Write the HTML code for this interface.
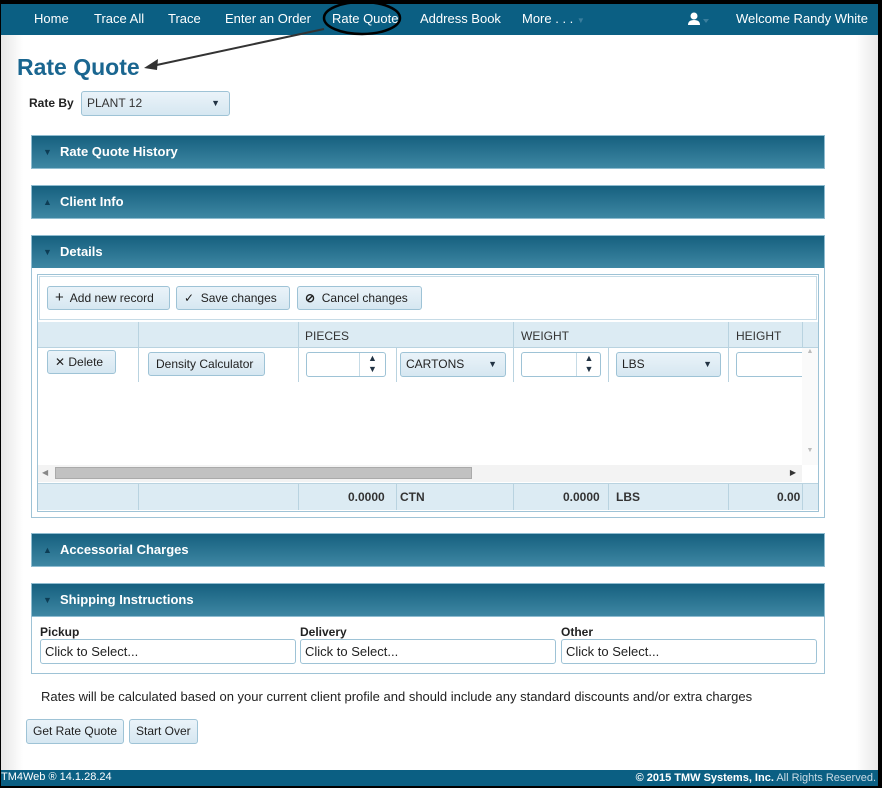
<!DOCTYPE html>
<html><head><style>
*{box-sizing:border-box;margin:0;padding:0}
body{width:882px;height:788px;background:#000;font-family:"Liberation Sans",Arial,sans-serif;position:relative;overflow:hidden}
.a{position:absolute}
#page{left:1px;top:4px;width:877px;height:782px;background:linear-gradient(90deg,#e6e6e6 0,#fff 22px,#fff 855px,#e8e8e8 877px)}
#nav{left:1px;top:4px;width:877px;height:31px;background:#0b5f83;color:#fff;font-size:13px}
#nav span{position:absolute;top:7px}
.hd{left:31px;width:794px;height:34px;border:1px solid #8fbcd0;background:linear-gradient(#16607f,#3e87a3);color:#fff;font-weight:bold;font-size:13px;padding:8px 0 0 28px}
.hd i{position:absolute;left:11px;top:11px;font-style:normal;font-size:9px;color:#0d3d55}
.btn{position:absolute;background:linear-gradient(#eaf3f9,#d6e7f1);border:1px solid #9ec3d6;border-radius:3px;font-size:12px;color:#222;height:24px;line-height:22px;padding:0 7px;white-space:nowrap}
.bx{position:absolute;border:1px solid #9ec3d6;border-radius:3px;background:#fff;height:25px;font-size:13px;padding:4px 4px;color:#222}
.vl{position:absolute;width:1px;background:#b9d3e0}
.lb{position:absolute;font-size:12px;color:#222}
</style></head><body>
<div class="a" id="page"></div>
<div class="a" id="nav">
<span style="left:33px">Home</span><span style="left:93px">Trace All</span><span style="left:167px">Trace</span><span style="left:224px">Enter an Order</span><span style="left:331px">Rate Quote</span><span style="left:419px">Address Book</span><span style="left:521px">More . . . <b style="font-size:8px;color:#3b7f9e">▼</b></span>
<svg style="position:absolute;left:687px;top:8px" width="24" height="14"><circle cx="6" cy="4" r="3.5" fill="#fff"/><path d="M0 13 Q0 8 6 8 Q12 8 12 13 Z" fill="#fff"/><path d="M15 7 L21 7 L18 11 Z" fill="#3b7f9e"/></svg>
<span style="left:735px">Welcome Randy White</span>
</div>
<svg class="a" style="left:0;top:0" width="882" height="120"><ellipse cx="362" cy="18" rx="38" ry="16" fill="none" stroke="#000" stroke-width="2.5"/><line x1="324" y1="29" x2="152" y2="66" stroke="#333" stroke-width="2"/><polygon points="144,68 158,59 157,70" fill="#333"/></svg>
<div class="a" style="left:17px;top:54px;font-size:23px;font-weight:bold;color:#1a6690">Rate Quote</div>
<div class="lb" style="left:29px;top:96px;font-size:12px;font-weight:bold">Rate By</div>
<div class="btn" style="left:81px;top:91px;width:149px;height:25px;padding:0 5px;font-size:12px;color:#333">PLANT 12<span style="position:absolute;right:9px;font-size:9px;color:#234">▼</span></div>

<div class="a hd" style="top:135px"><i>▼</i>Rate Quote History</div>
<div class="a hd" style="top:185px"><i>▲</i>Client Info</div>
<div class="a hd" style="top:235px"><i>▼</i>Details</div>
<div class="a" style="left:31px;top:268px;width:794px;height:250px;border:1px solid #9ec3d6;border-top:0;background:#fff"></div>
<div class="a" style="left:37px;top:274px;width:782px;height:238px;border:1px solid #9ec3d6;background:#fff"></div>
<div class="a" style="left:39px;top:276px;width:778px;height:44px;border:1px solid #c6dbe6"></div>
<div class="btn" style="left:47px;top:286px;width:123px"><b style="font-size:15px;font-weight:normal">+</b>&nbsp; Add new record</div>
<div class="btn" style="left:176px;top:286px;width:114px">✓&nbsp; Save changes</div>
<div class="btn" style="left:297px;top:286px;width:125px"><b>⊘</b>&nbsp; Cancel changes</div>
<div class="a" style="left:38px;top:322px;width:780px;height:26px;background:#dcebf3;border-bottom:1px solid #b9d3e0;font-size:12px;color:#333">
<span class="a" style="left:267px;top:7px">PIECES</span><span class="a" style="left:483px;top:7px">WEIGHT</span><span class="a" style="left:698px;top:7px">HEIGHT</span></div>
<div class="a" style="left:38px;top:483px;width:780px;height:27px;background:#dcebf3;border-top:1px solid #b9d3e0;font-size:12px;font-weight:bold;color:#333">
<span class="a" style="left:310px;top:6px">0.0000</span><span class="a" style="left:362px;top:6px">CTN</span><span class="a" style="left:525px;top:6px">0.0000</span><span class="a" style="left:578px;top:6px">LBS</span><span class="a" style="left:739px;top:6px">0.00</span></div>
<div class="vl" style="left:138px;top:322px;height:60px"></div><div class="vl" style="left:298px;top:322px;height:60px"></div><div class="vl" style="left:513px;top:322px;height:60px"></div><div class="vl" style="left:728px;top:322px;height:60px"></div><div class="vl" style="left:802px;top:322px;height:26px"></div>
<div class="vl" style="left:396px;top:348px;height:34px"></div><div class="vl" style="left:608px;top:348px;height:34px"></div>
<div class="vl" style="left:138px;top:483px;height:27px"></div><div class="vl" style="left:298px;top:483px;height:27px"></div><div class="vl" style="left:396px;top:483px;height:27px"></div><div class="vl" style="left:513px;top:483px;height:27px"></div><div class="vl" style="left:608px;top:483px;height:27px"></div><div class="vl" style="left:728px;top:483px;height:27px"></div><div class="vl" style="left:802px;top:483px;height:27px"></div>
<div class="btn" style="left:47px;top:350px;width:69px">✕ Delete</div>
<div class="btn" style="left:148px;top:352px;width:117px">Density Calculator</div>
<div class="bx" style="left:306px;top:352px;width:80px"><span style="position:absolute;left:52px;top:0;height:23px;border-left:1px solid #c6dbe6;width:26px;font-size:9px;text-align:center;line-height:11px;color:#234">▲<br>▼</span></div>
<div class="btn" style="left:400px;top:352px;width:106px;height:25px;line-height:23px;padding:0 5px">CARTONS<span style="position:absolute;right:8px;font-size:9px;color:#234">▼</span></div>
<div class="bx" style="left:521px;top:352px;width:80px"><span style="position:absolute;left:54px;top:0;height:23px;border-left:1px solid #c6dbe6;width:25px;font-size:9px;text-align:center;line-height:11px;color:#234">▲<br>▼</span></div>
<div class="btn" style="left:616px;top:352px;width:105px;height:25px;line-height:23px;padding:0 5px">LBS<span style="position:absolute;right:8px;font-size:9px;color:#234">▼</span></div>
<div class="bx" style="left:736px;top:352px;width:70px"></div>
<div class="a" style="left:802px;top:348px;width:16px;height:117px;background:#fafafa;font-size:7px;color:#bbb;text-align:center">▲<div style="margin-top:92px">▼</div></div>
<div class="a" style="left:38px;top:465px;width:764px;height:17px;background:#f3f3f3;font-size:8px;color:#888"><span class="a" style="left:4px;top:3px">◀</span><span class="a" style="right:6px;top:3px;color:#333">▶</span></div>
<div class="a" style="left:55px;top:467px;width:417px;height:12px;background:#c1c1c1;border:1px solid #aaa"></div>

<div class="a hd" style="top:533px"><i>▲</i>Accessorial Charges</div>
<div class="a hd" style="top:583px"><i>▼</i>Shipping Instructions</div>
<div class="a" style="left:31px;top:617px;width:794px;height:57px;border:1px solid #9ec3d6;border-top:0;background:#fff"></div>
<div class="lb" style="left:40px;top:625px;font-weight:bold">Pickup</div>
<div class="lb" style="left:300px;top:625px;font-weight:bold">Delivery</div>
<div class="lb" style="left:561px;top:625px;font-weight:bold">Other</div>
<div class="bx" style="left:40px;top:639px;width:256px">Click to Select...</div>
<div class="bx" style="left:300px;top:639px;width:256px">Click to Select...</div>
<div class="bx" style="left:561px;top:639px;width:256px">Click to Select...</div>
<div class="lb" style="left:41px;top:689px;font-size:13px">Rates will be calculated based on your current client profile and should include any standard discounts and/or extra charges</div>
<div class="btn" style="left:26px;top:719px;height:25px;line-height:23px;padding:0 6px">Get Rate Quote</div>
<div class="btn" style="left:129px;top:719px;height:25px;line-height:23px;padding:0 6px">Start Over</div>
<div class="a" style="left:1px;top:770px;width:877px;height:16px;background:#0b5f83;color:#fff;font-size:11px">
<span class="a" style="left:0;top:1px">TM4Web ® 14.1.28.24</span><span class="a" style="right:2px;top:2px"><b>© 2015 TMW Systems, Inc.</b> <span style="color:#c9dbe5">All Rights Reserved.</span></span></div>
</body></html>
